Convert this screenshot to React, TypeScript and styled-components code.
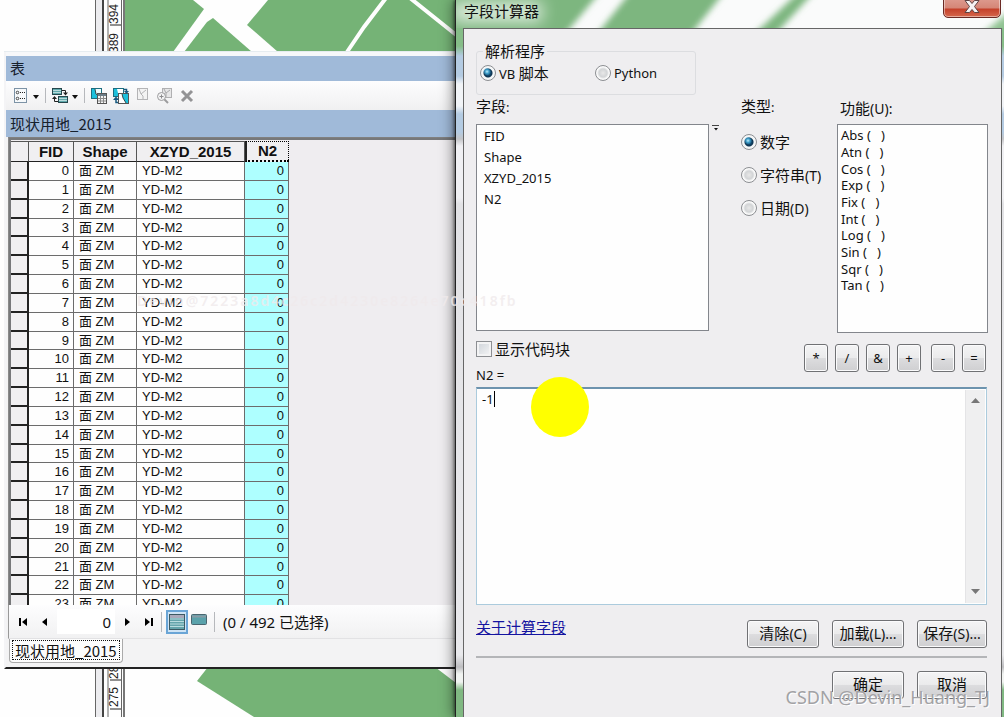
import React from "react";
import styled, { createGlobalStyle } from "styled-components";

const GlobalStyle = createGlobalStyle`
  *, *::before, *::after { box-sizing: border-box; }
  body { margin: 0; background: #fefefe; color: #111; overflow: hidden; }
  button, input, select, textarea { font: inherit; color: inherit; margin: 0; }
`;

const ui = `"Noto Sans", "Noto Sans CJK SC", sans-serif`;
const cjk = `"Noto Sans CJK SC", "Noto Sans", sans-serif`;
const grid = `"Liberation Sans", "Noto Sans CJK SC", sans-serif`;

const Desktop = styled.main`
  position: relative;
  height: 100vh;
  overflow: hidden;
  font-family: ${ui};
  font-size: 13px;
`;

const MapCanvas = styled.svg`
  display: block;
  width: 100%;
  height: 100%;
`;

/* ---------- attribute table window ---------- */

const TableWindow = styled.section`
  position: absolute;
  left: 4px;
  top: 52px;
  width: 60%;
  background: #f3f3f4;
  border-bottom: 2px solid #222;
  border-left: 2px solid #f4f4f6;
  box-shadow: 0 -1px 0 #e6ecf0;
`;

const Band = styled.h2<{ $tall?: boolean }>`
  margin: 0;
  height: ${(p) => (p.$tall ? 27 : 25)}px;
  padding-left: 4px;
  font: 400 15px/24px ${cjk};
  ${(p) => p.$tall && "line-height: 27px;"}
  background: #a0bad9;
  color: #16202c;
`;

const TopEdge = styled.div`
  height: 4px;
  background: #f7f8fa;
`;

const Toolbar = styled.div`
  display: flex;
  align-items: center;
  gap: 4px;
  height: 29px;
  padding-left: 7px;
  background: linear-gradient(#fdfdfe, #f0f0f1);
`;

const ToolGroup = styled.div`
  display: flex;
  gap: 6px;
`;

const IconButton = styled.button<{ $w?: number }>`
  display: block;
  width: ${(p) => p.$w ?? 16}px;
  height: 16px;
  padding: 0;
  border: 0;
  background: none;
  svg { display: block; width: 100%; height: 100%; }
`;

const Separator = styled.span<{ $tall?: boolean }>`
  width: 1px;
  height: ${(p) => (p.$tall ? 20 : 15)}px;
  margin: 0 ${(p) => (p.$tall ? 4 : 2)}px;
  background: #b6b8bc;
`;

const Viewport = styled.div`
  height: 468px;
  overflow: hidden;
  margin-left: 2px;
  border-top: 1px solid #808080;
  border-left: 1px solid #8a8a8a;
  background: #efedf0;
`;

const Sheet = styled.div`
  border-top: 2px solid #77787a;
  border-left: 2px solid #77787a;
`;

const DataTable = styled.table`
  border-collapse: separate;
  border-spacing: 0;
  table-layout: fixed;
  width: 278px;
  margin-top: 1px;
  font: 13px/16px ${grid};
  background: #fefefe;
`;

const HeadCell = styled.th<{ $active?: boolean }>`
  height: 21px;
  padding: 0;
  font-size: 15px;
  line-height: 18px;
  background: #f0eff1;
  border-right: 1px solid #555;
  border-bottom: 1px solid #222;
  border-top: 1px solid #555;
  ${(p) => p.$active && "border: 1px dotted #000; border-left: 2px solid #222; border-bottom-width: 2px;"}
`;

const RowHead = styled.td`
  padding: 0;
  background: #f0eff1;
  border-right: 2px solid #222;
  border-bottom: 2px solid #222;
`;

const Row = styled.tr`
  height: 19px;
  &:nth-child(6n + 4) { height: 18px; }
`;

const Cell = styled.td<{ $num?: boolean; $active?: boolean }>`
  padding: 0 4px 0 5px;
  text-align: ${(p) => (p.$num ? "right" : "left")};
  background: ${(p) => (p.$active ? "#aeffff" : "#fefefe")};
  border-right: 1px solid #6c6c6c;
  border-bottom: 1px solid #6c6c6c;
  white-space: nowrap;
`;

const StatusBar = styled.div`
  display: flex;
  align-items: center;
  height: 34px;
  margin-left: 2px;
  padding-left: 6px;
  border-left: 1px solid #999;
  background: linear-gradient(#fdfdfe, #f1f1f2);
  border-bottom: 1px solid #e2e2e4;
  font-size: 15px;
`;

const NavGroup = styled.div`
  display: flex;
  gap: 6px;
`;

const RecordInput = styled.input`
  width: 58px;
  height: 25px;
  margin: 0 4px;
  padding: 0 4px 0 0;
  border: 0;
  background: #fff;
  text-align: right;
`;

const ViewButton = styled.button<{ $on?: boolean }>`
  display: grid;
  place-items: center;
  width: 22px;
  height: 24px;
  padding: 0;
  border: ${(p) => (p.$on ? "2px solid #6aa5d6" : "0")};
  background: ${(p) => (p.$on ? "#cfe4f5" : "none")};
`;

const StatusText = styled.span`
  margin-left: 4px;
  white-space: nowrap;
`;

const TabStrip = styled.div`
  height: 28px;
  padding-left: 3px;
`;

const Tab = styled.button`
  height: 24px;
  padding: 1px 2px 2px;
  border: 1px solid #aaa;
  border-top: 0;
  border-radius: 0 0 4px 4px;
  background: #fcfcfc;
  span {
    display: block;
    height: 20px;
    border: 1px dotted #111;
    font: 15px/19px ${cjk};
    padding: 0 2px;
  }
`;

/* ---------- field calculator dialog ---------- */

const Dialog = styled.section`
  position: absolute;
  inset: 0 0 0 455px;
  display: flex;
  flex-direction: column;
  border-left: 1px solid #222;
  padding: 0 2px 0 7px;
  box-shadow: -1px 0 3px rgba(0, 0, 0, 0.5), -3px 0 12px rgba(0, 0, 0, 0.4);
  background: linear-gradient(
    #86bd88 0, #86bd88 46px, #b4cbe2 56px, #b4cbe2 76px, #f2f4f7 84px, #f2f4f7 106px,
    #b4cbe2 114px, #b4cbe2 132px, #c4c5c8 139px, #f0f0f3 146px, #f0f0f3 198px, #e2e2e5 204px,
    #e9e9ec 655px, #bdbdc0 667px, #f1f3f1 674px, #f1f3f1 682px, #80b882 690px
  );
`;

const TitleBar = styled.header`
  position: relative;
  height: 28px;
  flex: none;
  margin: 0 -2px 0 -7px;
  overflow: hidden;
  background: #fafbfb;
`;

const Glass = styled.svg`
  display: block;
  width: 100%;
  height: 28px;
`;

const Title = styled.h1`
  position: absolute;
  left: 8px;
  top: 0;
  margin: 0;
  font: 400 15px/22px ${cjk};
`;

const CloseButton = styled.button`
  position: absolute;
  right: 3px;
  top: -5px;
  width: 58px;
  height: 23px;
  padding: 0;
  display: grid;
  place-items: center;
  border: 1px solid #6b2a24;
  border-radius: 0 0 5px 5px;
  background: linear-gradient(#e0a196 0, #d58677 12px, #c4402a 13px, #d5674c 100%);
  box-shadow: inset 0 0 0 1px rgba(255, 255, 255, 0.45);
`;

const Client = styled.form`
  flex: 1;
  min-height: 0;
  overflow: hidden;
  padding: 12px 13px 0 12px;
  border: 1px solid #666;
  border-bottom: 0;
  background: #efeef0;
`;

const Cn = styled.span`
  font: 15px/20px ${cjk};
`;

const Key = styled.span`
  font-size: 14px;
`;

const ParserGroup = styled.fieldset`
  display: flex;
  align-items: center;
  width: 220px;
  height: 54px;
  margin: 0;
  padding: 0 0 10px 3px;
  border: 1px solid #dcdde0;
  border-radius: 3px;
  min-width: 0;
  legend { padding: 0 2px; margin-left: 3px; }
`;

const Choice = styled.label<{ $w?: number }>`
  display: flex;
  align-items: center;
  gap: 3px;
  height: 20px;
  white-space: nowrap;
  ${(p) => p.$w && `width: ${p.$w}px;`}
`;

const Radio = styled.input`
  appearance: none;
  flex: none;
  width: 16px;
  height: 16px;
  border: 1px solid #8c8e92;
  border-radius: 50%;
  background: radial-gradient(circle at 50% 50%, #e8e8e8 0, #d2d4d6 4px, #fafafa 6px);
  &:checked {
    background:
      radial-gradient(circle at 43% 40%, #b9ecfb 0, #3c9cc8 2px, transparent 4px),
      radial-gradient(circle at 50% 50%, #1c6a98 0, #0d3350 4px, #f4f6f7 5px);
  }
`;

const CheckBox = styled.input`
  appearance: none;
  flex: none;
  width: 16px;
  height: 16px;
  border: 1px solid #8c8e92;
  background: linear-gradient(135deg, #cdd2d8, #f6f6f7);
  box-shadow: inset 0 0 0 2px #f3f3f4;
`;

const Columns = styled.div`
  display: grid;
  grid-template-columns: 233fr 32px 96px 151fr;
  margin-top: 1px;
`;

const Panel = styled.div`
  display: flex;
  flex-direction: column;
  min-width: 0;
`;

const Caption = styled.label<{ $drop?: boolean }>`
  height: 28px;
  padding-top: ${(p) => (p.$drop ? 2 : 0)}px;
  padding-left: ${(p) => (p.$drop ? 3 : 0)}px;
  line-height: 20px;
  white-space: nowrap;
`;

const ListBox = styled.select<{ $pitch: number }>`
  appearance: none;
  width: 100%;
  height: ${(p) => (p.$pitch === 21 ? 207 : 209)}px;
  padding: 2px 0 0;
  border: 1px solid #83868c;
  border-radius: 0;
  outline: 0;
  overflow: hidden;
  background: #fefefe;
  option {
    height: ${(p) => p.$pitch}px;
    min-height: 0;
    line-height: ${(p) => p.$pitch}px;
    padding: 0 ${(p) => (p.$pitch === 21 ? 7 : 3)}px;
    white-space: pre;
  }
  ${(p) => p.$pitch === 17 && "padding-top: 1px; option:nth-child(3n) { height: 16px; line-height: 16px; }"}
`;

const Marker = styled.svg`
  width: 7px;
  height: 6px;
  margin: 29px 0 0 3px;
`;

const TypeChoices = styled.div`
  display: flex;
  flex-direction: column;
  gap: 13px;
  padding-top: 8px;
`;

const OptionRow = styled.div`
  display: flex;
  justify-content: space-between;
  align-items: flex-start;
  margin-top: 6px;
`;

const Operators = styled.div`
  display: flex;
  gap: 7px;
  padding: 5px 2px 0 0;
`;

const PushButton = styled.button<{ $w: number }>`
  width: ${(p) => p.$w}px;
  height: 28px;
  padding: 0;
  border: 1px solid #707174;
  border-radius: 3px;
  background: linear-gradient(#f4f4f5 0, #ebebec 48%, #dcdcde 52%, #cfcfd1 100%);
  box-shadow: inset 0 0 0 1px #fbfbfc;
  line-height: 24px;
  white-space: nowrap;
`;

const Signs = styled.div`
  display: flex;
  gap: 7px;
  margin-left: 3px;
`;

const ExpressionLabel = styled.label`
  display: block;
  height: 20px;
  margin-top: -7px;
  line-height: 20px;
`;

const Editor = styled.div`
  position: relative;
  display: flex;
  height: 218px;
  margin: 2px 1px 0 0;
  border: 1px solid #abcbdd;
  border-top: 2px solid #6d93ae;
  background: #fefefe;
`;

const Expression = styled.textarea`
  position: relative;
  flex: 1;
  min-width: 0;
  padding: 1px 5px;
  border: 0;
  outline: 0;
  resize: none;
  background: transparent;
  line-height: 18px;
  overflow: hidden;
`;

const Caret = styled.i`
  position: absolute;
  left: 17px;
  top: 2px;
  width: 1px;
  height: 16px;
  background: #000;
`;

const Pointer = styled.i`
  position: absolute;
  left: 54px;
  top: -12px;
  width: 58px;
  height: 60px;
  border-radius: 50%;
  background: #ffff00;
`;

const ScrollTrack = styled.div`
  display: flex;
  flex-direction: column;
  justify-content: space-between;
  align-items: center;
  width: 20px;
  margin: 1px 1px 1px 0;
  padding: 8px 0 9px;
  background: #efeff0;
  border-left: 1px solid #e4e4e6;
  svg { width: 9px; height: 5px; }
`;

const Footer = styled.div`
  display: flex;
  justify-content: space-between;
  align-items: flex-start;
  margin-right: 1px;
  padding: 15px 0 8px;
  border-bottom: 2px solid #b4b5b8;
`;

const HelpLink = styled.a`
  margin-top: -3px;
  color: #1414a0;
  font: 15px/20px ${cjk};
`;

const Actions = styled.div`
  display: grid;
  grid-template-columns: 72px 72px 70px;
  column-gap: 13px;
  justify-content: end;
`;

const Confirm = styled(Actions)`
  grid-template-columns: 72px 70px;
  padding: 13px 1px 0 0;
`;

const Stamp = styled.div`
  position: absolute;
  right: 14px;
  bottom: 8px;
  font: 18px/24px ${ui};
  color: #a2a2a5;
  text-shadow: 1px 1px 0 #fff;
`;

const Trace = styled.div`
  position: absolute;
  left: 137px;
  top: 291px;
  font: 600 14px/20px ${ui};
  letter-spacing: 2px;
  color: rgba(240, 234, 236, 0.8);
  pointer-events: none;
`;

const Backdrop = () => (
  <MapCanvas viewBox="0 0 1004 717" preserveAspectRatio="xMinYMin slice" aria-hidden="true">
    <rect width="1004" height="717" fill="#fefefe" />
    <rect x="95" width="8" height="717" fill="#ececef" />
    <path d="M95.500 0V717M108 0V717M121.500 0V717" stroke="#666" fill="none" />
    <path d="M103 0V717" stroke="#444" strokeWidth="2" />
    <path d="M124 0V717" stroke="#777" strokeWidth="2" />
    <g fill="#75b376">
      <path d="M125 0H193L204 9L173 52H125Z" />
      <path d="M207 22L213 18L252 52H184Z" />
      <path d="M268 0H456V52H278L247 25Z" />
      <path d="M208 667L197 681L254 717H456V683L435 667Z" />
    </g>
    <path d="M386 -2L364 27L347 52M410 -2L460 38" stroke="#fefefe" strokeWidth="4" fill="none" />
    <g fontFamily="Liberation Sans, sans-serif" fontSize="12" fill="#222">
      <text transform="translate(118 24) rotate(-90)">394</text>
      <text transform="translate(118 53) rotate(-90)">389</text>
      <text transform="translate(118 679) rotate(-90)">280</text>
      <text transform="translate(118 707) rotate(-90)">275</text>
    </g>
    <path d="M110 25H121M110 680H121M110 709H121" stroke="#222" />
  </MapCanvas>
);

const GlassArt = () => (
  <Glass viewBox="0 0 549 28" preserveAspectRatio="xMinYMin slice" aria-hidden="true">
    <defs>
      <filter id="soft" x="-10%" y="-50%" width="120%" height="200%"><feGaussianBlur stdDeviation="3" /></filter>
      <filter id="glow" x="-30%" y="-80%" width="160%" height="260%"><feGaussianBlur stdDeviation="8" /></filter>
    </defs>
    <g filter="url(#soft)">
      <path d="M-10 -10H146L106 38H-10Z" fill="#7db67f" />
      <path d="M176 -10H270L232 38H138Z" fill="#7db67f" />
      <path d="M345 -10H360L316 38H294Z" fill="#7db67f" />
      <path d="M521 38L560 6V38Z" fill="#8fc291" />
    </g>
    <rect x="-4" y="2" width="90" height="20" fill="#fff" opacity="0.75" filter="url(#glow)" />
  </Glass>
);

const DropArrow = () => (
  <svg viewBox="0 0 6 16"><path d="M0 7H6L3 11Z" fill="#111" /></svg>
);

const icons = {
  list: (
    <svg viewBox="0 0 16 16">
      <rect x="1.500" y=".5" width="12" height="14" fill="#f6f9fb" stroke="#7d93a6" />
      <path d="M7 4.500H8M9 4.500H10M11 4.500H12M7 10.500H8M9 10.500H10M11 10.500H12" stroke="#222" />
      <circle cx="4.500" cy="4.500" r="1.300" fill="none" stroke="#222" strokeWidth=".8" />
      <circle cx="4.500" cy="10.500" r="1.300" fill="none" stroke="#222" strokeWidth=".8" />
    </svg>
  ),
  related: (
    <svg viewBox="0 0 16 16">
      <rect x=".5" y=".5" width="9" height="6" fill="#5fa9ac" stroke="#27474d" />
      <path d="M1 2.500H9M1 4.500H9" stroke="#d2e9e8" strokeWidth=".8" />
      <rect x="6.500" y="8.500" width="9" height="6" fill="#5fa9ac" stroke="#27474d" />
      <path d="M7 10.500H15M7 12.500H15" stroke="#d2e9e8" strokeWidth=".8" />
      <path d="M10 2.500H13.500V5M6 13.500H2.500V10" fill="none" stroke="#222" />
      <path d="M11 4.500H16L13.500 7.500ZM0 11L2.500 8L5 11Z" fill="#222" />
    </svg>
  ),
  select: (
    <svg viewBox="0 0 16 16">
      <rect x=".5" y=".5" width="10" height="10" fill="#ecfbfd" stroke="#1d6d80" />
      <path d="M1 1H4L5 6L9 10H1Z" fill="#1cc0dc" />
      <path d="M4 1L5 6L10 10" fill="none" stroke="#222" strokeWidth=".8" />
      <rect x="6.500" y="5.500" width="9" height="10" fill="#f4f4f4" stroke="#555" />
      <path d="M7 7H15" stroke="#6b7c87" strokeWidth="2" />
      <path d="M7 10.500H15M7 13H15M9.500 8V15M12.500 8V15" stroke="#888" />
    </svg>
  ),
  swap: (
    <svg viewBox="0 0 16 16">
      <rect x=".5" y=".5" width="10" height="8" fill="#1cc0dc" stroke="#1d6d80" />
      <path d="M4 1L5 5L8 8H10V1Z" fill="#fff" />
      <rect x="5.500" y="5.500" width="10" height="10" fill="#1cc0dc" stroke="#555" />
      <path d="M6 6H9L10 10L13 15H6Z" fill="#fff" />
      <path d="M9 6L10 10L13 15" fill="none" stroke="#222" strokeWidth=".8" />
      <path d="M11 1.500H13.500V3M5 14.500H3V11" stroke="#17597f" strokeWidth="1.500" fill="none" />
      <path d="M11 3H16L13.500 6ZM0 12L3 8.500L6 12Z" fill="#17597f" />
    </svg>
  ),
  clear: (
    <svg viewBox="0 0 16 16">
      <rect x="2.500" y=".5" width="10" height="11" fill="#f3f3f3" stroke="#b4b4b6" />
      <path d="M4 1L6 6L11 2M6 6L8 8V11" fill="none" stroke="#b4b4b6" />
    </svg>
  ),
  zoomTo: (
    <svg viewBox="0 0 16 16">
      <rect x="5.500" y=".5" width="9" height="9" fill="#e6e6e7" stroke="#b0b0b2" />
      <path d="M7 1L9 5L13 2M9 5V9" fill="none" stroke="#a8a8aa" />
      <circle cx="4.500" cy="8.500" r="4" fill="#f2f2f3" stroke="#9c9c9e" />
      <path d="M2.500 8.500H6.500M4.500 6.500V10.500" stroke="#8c8c8e" />
      <path d="M7.500 11.500L11 15" stroke="#9c9c9e" strokeWidth="2" />
    </svg>
  ),
  remove: (
    <svg viewBox="0 0 16 16"><path d="M3 3L13 13M13 3L3 13" stroke="#939395" strokeWidth="3" /></svg>
  ),
};

const Nav = ({ label, d }: { label: string; d: string }) => (
  <IconButton type="button" aria-label={label}>
    <svg viewBox="0 0 16 16"><path d={d} fill="#000" /></svg>
  </IconButton>
);

const records = Array.from({ length: 24 }, (_, i) => i);
const functions = ["Abs", "Atn", "Cos", "Exp", "Fix", "Int", "Log", "Sin", "Sqr", "Tan"];

const AttributeTable = () => (
  <TableWindow>
    <TopEdge />
    <Band>表</Band>
    <Toolbar>
      <IconButton aria-label="表选项">{icons.list}</IconButton>
      <IconButton $w={6} aria-label="更多选项"><DropArrow /></IconButton>
      <Separator />
      <IconButton aria-label="关联表">{icons.related}</IconButton>
      <IconButton $w={6} aria-label="更多关联"><DropArrow /></IconButton>
      <Separator />
      <ToolGroup>
        <IconButton aria-label="按属性选择">{icons.select}</IconButton>
        <IconButton aria-label="切换选择">{icons.swap}</IconButton>
        <IconButton aria-label="清除所选内容">{icons.clear}</IconButton>
        <IconButton aria-label="缩放至所选项">{icons.zoomTo}</IconButton>
        <IconButton aria-label="删除所选项">{icons.remove}</IconButton>
      </ToolGroup>
    </Toolbar>
    <Band $tall>现状用地_2015</Band>
    <Viewport>
      <Sheet>
        <DataTable>
          <colgroup>
            <col width="18" /><col width="45" /><col width="63" /><col width="108" /><col width="44" />
          </colgroup>
          <thead>
            <tr>
              <HeadCell /><HeadCell>FID</HeadCell><HeadCell>Shape</HeadCell>
              <HeadCell>XZYD_2015</HeadCell><HeadCell $active>N2</HeadCell>
            </tr>
          </thead>
          <tbody>
            {records.map((id) => (
              <Row key={id}>
                <RowHead />
                <Cell $num>{id}</Cell>
                <Cell>面 ZM</Cell>
                <Cell>YD-M2</Cell>
                <Cell $num $active>0</Cell>
              </Row>
            ))}
          </tbody>
        </DataTable>
      </Sheet>
    </Viewport>
    <StatusBar>
      <NavGroup>
        <Nav label="第一条" d="M4 4H6V12H4ZM12 4V12L7 8Z" />
        <Nav label="上一条" d="M10 4V12L5 8Z" />
      </NavGroup>
      <RecordInput aria-label="记录" defaultValue="0" />
      <NavGroup>
        <Nav label="下一条" d="M6 4V12L11 8Z" />
        <Nav label="最后一条" d="M4 4V12L9 8ZM10 4H12V12H10Z" />
      </NavGroup>
      <Separator $tall />
      <ViewButton type="button" $on aria-label="显示所有记录">
        <svg width="16" height="16" viewBox="0 0 16 16">
          <rect x=".5" y=".5" width="15" height="15" fill="#64a4ab" stroke="#3c5a63" />
          <path d="M1 2.500H15" stroke="#aab" strokeWidth="3" />
          <path d="M1 5H15M1 7.500H15M1 10H15M1 12.500H15" stroke="#b9dcdf" />
        </svg>
      </ViewButton>
      <ViewButton type="button" aria-label="显示所选记录">
        <svg width="16" height="16" viewBox="0 0 16 16">
          <rect x=".5" y=".5" width="15" height="10" rx="1" fill="#5aa2ab" stroke="#4a6670" />
          <path d="M1 2.500H15" stroke="#889ca6" strokeWidth="2" />
        </svg>
      </ViewButton>
      <Separator $tall />
      <StatusText>(0 / 492 已选择)</StatusText>
    </StatusBar>
    <TabStrip>
      <Tab type="button"><span>现状用地_2015</span></Tab>
    </TabStrip>
  </TableWindow>
);

const Calculator = () => (
  <Dialog role="dialog" aria-labelledby="calc-title">
    <TitleBar>
      <GlassArt />
      <Title id="calc-title">字段计算器</Title>
      <CloseButton aria-label="关闭">
        <svg width="16" height="13" viewBox="0 0 16 13">
          <path d="M1 .5H5.500L8 3.500L10.500 .5H15L10.500 6.500L15 12.500H10.500L8 9.500L5.500 12.500H1L5.500 6.500Z" fill="#f6f3f3" stroke="#5e4444" />
        </svg>
      </CloseButton>
    </TitleBar>
    <Client onSubmit={(e) => e.preventDefault()}>
      <ParserGroup>
        <legend><Cn>解析程序</Cn></legend>
        <Choice $w={115}><Radio type="radio" name="parser" defaultChecked /><span>VB <Cn>脚本</Cn></span></Choice>
        <Choice><Radio type="radio" name="parser" />Python</Choice>
      </ParserGroup>
      <Columns>
        <Panel>
          <Caption htmlFor="fields"><Cn>字段</Cn>:</Caption>
          <ListBox id="fields" size={9} $pitch={21}>
            <option>FID</option><option>Shape</option><option>XZYD_2015</option><option>N2</option>
          </ListBox>
        </Panel>
        <Marker viewBox="0 0 7 6"><path d="M0 .5H7" stroke="#444" /><path d="M2 3H6L4 5.500Z" fill="#111" /></Marker>
        <Panel role="radiogroup" aria-labelledby="type-label">
          <Caption as="span" id="type-label" $drop={false}><Cn>类型</Cn>:</Caption>
          <TypeChoices>
            <Choice><Radio type="radio" name="type" defaultChecked /><Cn>数字</Cn></Choice>
            <Choice><Radio type="radio" name="type" /><span><Cn>字符串</Cn><Key>(T)</Key></span></Choice>
            <Choice><Radio type="radio" name="type" /><span><Cn>日期</Cn><Key>(D)</Key></span></Choice>
          </TypeChoices>
        </Panel>
        <Panel>
          <Caption htmlFor="functions" $drop><Cn>功能</Cn><Key>(U):</Key></Caption>
          <ListBox id="functions" size={11} $pitch={17}>
            {functions.map((f) => <option key={f}>{f + " (\u00a0\u00a0\u00a0)"}</option>)}
          </ListBox>
        </Panel>
      </Columns>
      <OptionRow>
        <Choice><CheckBox type="checkbox" /><Cn>显示代码块</Cn></Choice>
        <Operators>
          {["*", "/", "&", "+"].map((o) => <PushButton type="button" key={o} $w={24}>{o}</PushButton>)}
          <Signs>
            {["-", "="].map((o) => <PushButton type="button" key={o} $w={24}>{o}</PushButton>)}
          </Signs>
        </Operators>
      </OptionRow>
      <ExpressionLabel htmlFor="expression">N2 =</ExpressionLabel>
      <Editor>
        <Pointer />
        <Expression id="expression" defaultValue="-1" spellCheck={false} />
        <Caret />
        <ScrollTrack>
          <svg viewBox="0 0 9 5"><path d="M0 5L4.500 0L9 5Z" fill="#777" /></svg>
          <svg viewBox="0 0 9 5"><path d="M0 0L4.500 5L9 0Z" fill="#777" /></svg>
        </ScrollTrack>
      </Editor>
      <Footer>
        <HelpLink href="#about">关于计算字段</HelpLink>
        <Actions>
          <PushButton type="button" $w={72}><Cn>清除</Cn><Key>(C)</Key></PushButton>
          <PushButton type="button" $w={72}><Cn>加载</Cn><Key>(L)...</Key></PushButton>
          <PushButton type="button" $w={70}><Cn>保存</Cn><Key>(S)...</Key></PushButton>
        </Actions>
      </Footer>
      <Confirm>
        <PushButton type="submit" $w={72}><Cn>确定</Cn></PushButton>
        <PushButton type="button" $w={70}><Cn>取消</Cn></PushButton>
      </Confirm>
    </Client>
  </Dialog>
);

export default function App() {
  return (
    <Desktop>
      <GlobalStyle />
      <Backdrop />
      <AttributeTable />
      <Calculator />
      <Trace>Devin@7223a8d4c26c2d4230e8264e70c418fb</Trace>
      <Stamp>CSDN @Devin_Huang_TJ</Stamp>
    </Desktop>
  );
}
